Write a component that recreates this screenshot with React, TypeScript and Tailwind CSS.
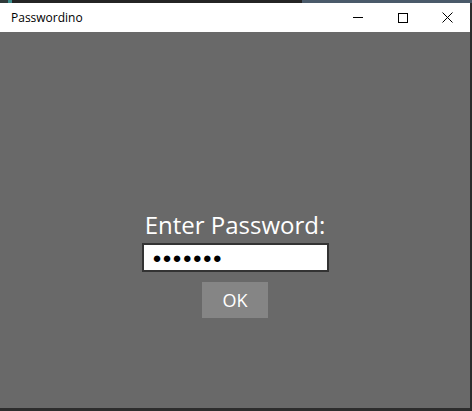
export default function App() {
  return (
    <div className="h-[411px] w-[472px] overflow-hidden bg-[#2d2d2d] font-['Open_Sans','Noto_Sans',sans-serif]">
      <div className="flex h-[3px] w-full">
        <div className="h-full w-[8px] bg-[#2f3a3a]" />
        <div className="h-full w-[4px] bg-[#3d8c8c]" />
        <div className="h-full w-[290px] bg-[#242424]" />
        <div className="h-full flex-1 bg-[#4a5a6a]" />
      </div>
      <div className="flex h-[405px] w-[470px] flex-col">
        <div className="flex h-[29px] items-center bg-white">
          <span className="ml-[11px] text-[12px] text-black">Passwordino</span>
          <div className="ml-auto flex h-full">
            <div className="flex w-[45px] items-center justify-center">
              <div className="h-px w-[10px] bg-black" />
            </div>
            <div className="flex w-[45px] items-center justify-center">
              <div className="h-[10px] w-[10px] border border-black" />
            </div>
            <div className="flex w-[45px] items-center justify-center">
              <svg width="11" height="11" viewBox="0 0 11 11" fill="none" stroke="black" strokeWidth="1">
                <path d="M0.5 0.5 L10.5 10.5 M10.5 0.5 L0.5 10.5" />
              </svg>
            </div>
          </div>
        </div>
        <div className="flex flex-1 flex-col items-center bg-[#696969] pt-[177px]">
          <div className="text-[24px] leading-[32px] text-white">Enter Password:</div>
          <div className="mt-[2px] flex h-[29px] w-[187px] items-center border-2 border-[#333] bg-white pl-[9px]">
            <span className="text-[15px] leading-none tracking-[1px] text-black">●●●●●●●</span>
          </div>
          <div className="mt-[10px] flex h-[36px] w-[66px] items-center justify-center bg-[#858585] text-[18px] text-white">
            OK
          </div>
        </div>
      </div>
    </div>
  );
}
